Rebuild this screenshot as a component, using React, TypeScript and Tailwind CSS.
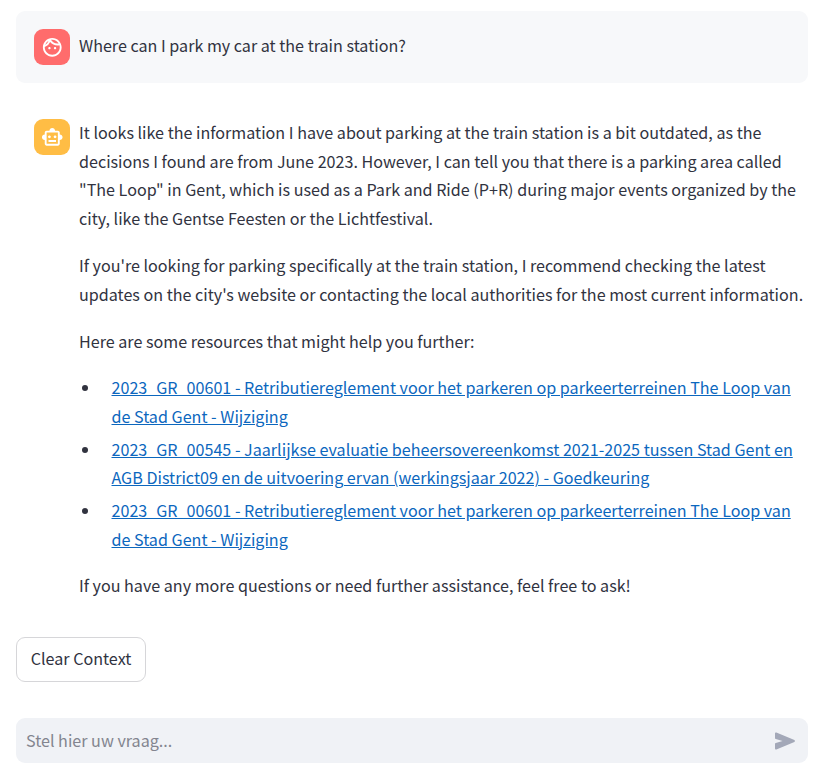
import { Fragment, type ReactNode } from "react";

function FaceIcon() {
  return (
    <svg viewBox="0 0 24 24" className="h-[22.5px] w-[22.5px]" fill="currentColor">
      <path d="M10.25 13c0 .69-.56 1.25-1.25 1.25S7.750 13.690 7.750 13 8.310 11.750 9 11.750s1.250.560 1.250 1.250zM15 11.750c-.69 0-1.250.560-1.250 1.250s.560 1.250 1.250 1.250 1.250-.560 1.250-1.250-.560-1.250-1.250-1.250zm7 .25c0 5.520-4.480 10-10 10S2 17.520 2 12 6.480 2 12 2s10 4.480 10 10zM10.660 4.120C12.060 6.440 14.600 8 17.500 8c.46 0 .91-.050 1.340-.120C17.440 5.560 14.900 4 12 4c-.46 0-.91.050-1.340.120zM4.420 9.470a8.046 8.046 0 0 0 3.660-4.440 8.046 8.046 0 0 0-3.660 4.440zM20 12c0-.78-.12-1.530-.33-2.240-.7.150-1.420.240-2.170.240a10 10 0 0 1-7.760-3.690A10.016 10.016 0 0 1 4 11.860c.010.040 0 .090 0 .140 0 4.410 3.590 8 8 8s8-3.590 8-8z" />
    </svg>
  );
}

function BotIcon() {
  return (
    <svg viewBox="0 0 24 24" className="h-[22.5px] w-[22.5px]" fill="currentColor">
      <path d="M20 9V7c0-1.100-.9-2-2-2h-3c0-1.660-1.340-3-3-3S9 3.340 9 5H6c-1.100 0-2 .9-2 2v2c-1.660 0-3 1.340-3 3s1.340 3 3 3v4c0 1.100.9 2 2 2h12c1.100 0 2-.9 2-2v-4c1.660 0 3-1.340 3-3s-1.340-3-3-3zm-2 10H6V7h12v12zm-9-6c-.83 0-1.500-.67-1.500-1.500S8.170 10 9 10s1.500.67 1.500 1.500S9.830 13 9 13zm7.500-1.500c0 .83-.67 1.500-1.500 1.500s-1.500-.67-1.500-1.500.67-1.500 1.500-1.500 1.500.67 1.500 1.500zM8 15h8v2H8v-2z" />
    </svg>
  );
}

function Lines({ lines }: { lines: string[] }) {
  return (
    <>
      {lines.map((line, i) => (
        <Fragment key={i}>
          {i > 0 && <br />}
          {line}
        </Fragment>
      ))}
    </>
  );
}

function Avatar({ color, children }: { color: string; children: ReactNode }) {
  return (
    <div className={`flex h-9 w-9 shrink-0 items-center justify-center rounded-[9px] text-white ${color}`}>
      {children}
    </div>
  );
}

const resources = [
  ["2023_GR_00601 - Retributiereglement voor het parkeren op parkeerterreinen The Loop van", "de Stad Gent - Wijziging"],
  [
    "2023_GR_00545 - Jaarlijkse evaluatie beheersovereenkomst 2021-2025 tussen Stad Gent en",
    "AGB District09 en de uitvoering ervan (werkingsjaar 2022) - Goedkeuring",
  ],
  ["2023_GR_00601 - Retributiereglement voor het parkeren op parkeerterreinen The Loop van", "de Stad Gent - Wijziging"],
];

export default function App() {
  return (
    <main className="flex h-[771px] w-[822px] flex-col overflow-hidden bg-white pt-[11px] pr-[14px] pl-4 font-['Noto_Sans_CJK_SC','Noto_Sans',sans-serif] text-[16.12px] leading-[28.8px] whitespace-nowrap text-[#31333f]">
      <section className="flex h-[72px] shrink-0 gap-[9px] rounded-[9px] bg-[#f7f8fa] p-[18px]">
        <Avatar color="bg-[#ff6c6c]">
          <FaceIcon />
        </Avatar>
        <p className="pt-[2px]">Where can I park my car at the train station?</p>
      </section>

      <section className="mt-[18px] flex h-[500px] shrink-0 gap-[9px] p-[18px] pb-0">
        <Avatar color="bg-[#ffbd45]">
          <BotIcon />
        </Avatar>
        <div className="-mt-[1.18px] flex flex-col gap-[18px]">
          <p>
            <Lines
              lines={[
                "It looks like the information I have about parking at the train station is a bit outdated, as the",
                "decisions I found are from June 2023. However, I can tell you that there is a parking area called",
                "\"The Loop\" in Gent, which is used as a Park and Ride (P+R) during major events organized by the",
                "city, like the Gentse Feesten or the Lichtfestival.",
              ]}
            />
          </p>
          <p>
            <Lines
              lines={[
                "If you're looking for parking specifically at the train station, I recommend checking the latest",
                "updates on the city's website or contacting the local authorities for the most current information.",
              ]}
            />
          </p>
          <p>Here are some resources that might help you further:</p>
          <ul className="flex flex-col gap-[3.6px]">
            {resources.map((lines, i) => (
              <li key={i} className="flex">
                <span className="mt-[12px] mr-[23.5px] ml-[3px] h-[6px] w-[6px] shrink-0 rounded-full bg-[#31333f]" />
                <a className="text-[#0c67be] underline">
                  <Lines lines={lines} />
                </a>
              </li>
            ))}
          </ul>
          <p>If you have any more questions or need further assistance, feel free to ask!</p>
        </div>
      </section>

      <button className="mt-[36px] flex h-[45px] w-[130px] shrink-0 items-center justify-center rounded-[9px] border border-[#d6d6d9] pb-[2px]">
        Clear Context
      </button>

      <div className="mt-auto mb-2 flex h-[45px] shrink-0 items-center justify-between rounded-[9px] bg-[#f0f2f6] pr-[12px] pl-[10px] text-[#83858f]">
        <span>Stel hier uw vraag...</span>
        <svg viewBox="0 0 22 18" className="h-[18px] w-[22px]" fill="#a3a8b8">
          <path d="M1 1.500Q1 .1 2.400.6L20.400 8.100Q21.600 9 20.400 9.900L2.400 17.400Q1 17.900 1 16.500V12.100Q1 11.300 1.800 11.100L8.500 9 1.800 6.900Q1 6.700 1 5.900Z" />
        </svg>
      </div>
    </main>
  );
}
